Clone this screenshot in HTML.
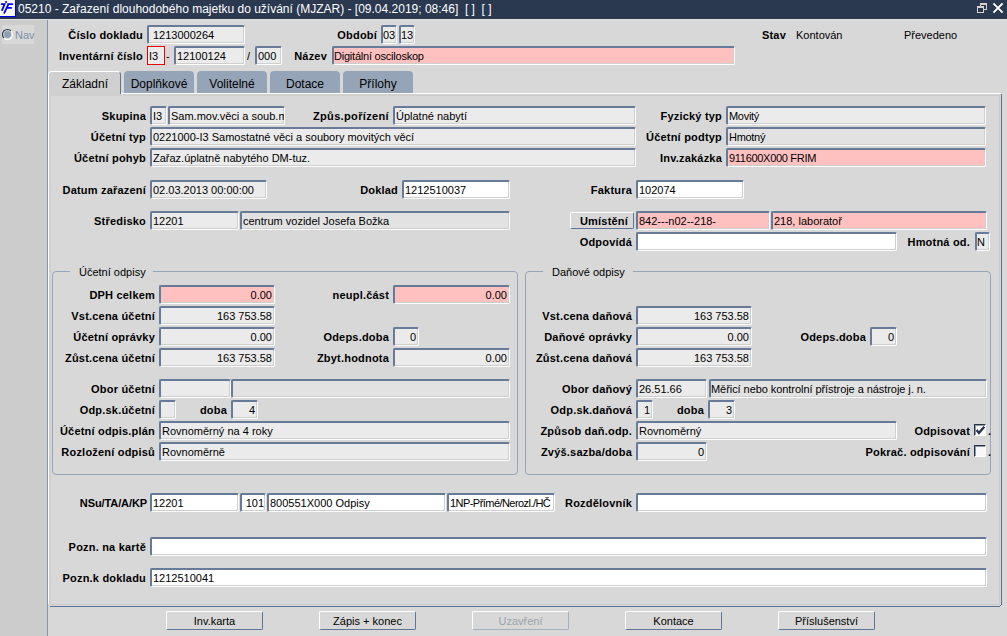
<!DOCTYPE html>
<html><head><meta charset="utf-8"><style>
html,body{margin:0;padding:0;}
body{width:1007px;height:636px;overflow:hidden;position:relative;background:#d8d8d8;font-family:"Liberation Sans",sans-serif;}
div{position:absolute;box-sizing:border-box;}
.tx{font-size:11px;line-height:13px;white-space:pre;color:#000;letter-spacing:0px;}
.lb{font-size:11px;line-height:13px;white-space:pre;color:#000;font-weight:bold;letter-spacing:0.2px;}
.r{text-align:right;}
.c{text-align:center;}
.in{overflow:hidden;border-top:2px solid #677b99;border-left:2px solid #677b99;border-right:1px solid #fff;border-bottom:1px solid #fff;border-radius:2px;box-shadow:inset -1px -1px 0 #cfcfcf;}
.btn{border:1px solid #fff;border-right-color:#5f7595;border-bottom-color:#5f7595;border-radius:2px;background:#d8d8d8;}
.tab{border-radius:4px 4px 0 0;background:#95a4b7;}
.tabt{font-size:12px;line-height:14px;white-space:pre;color:#000;}
.gb{border:1px solid #97a5b9;border-radius:4px;}
</style></head><body>

<div style="left:0;top:0;width:1007px;height:19px;background:#2a3850"></div>
<div style="left:0;top:19px;width:1007px;height:1px;background:#e4e1de"></div>
<div style="left:0;top:0;width:16px;height:17px;background:#f8f8f8;border-right:1px solid #0000ee;border-bottom:1px solid #0000ee"></div>
<svg style="position:absolute;left:0;top:0" width="16" height="16" viewBox="0 0 16 16"><g stroke="#0000f0" stroke-width="1.8" fill="none" stroke-linecap="round"><path d="M1.6 4.1H4.6L2.1 10.1"/><path d="M7.9 4.1H12.4M8.4 4.3L4.3 12.9M7 7.8H11.2"/></g><circle cx="6.1" cy="1.9" r="1.0" fill="#0000a0"/></svg>
<div style="left:18px;top:2px;font-size:12px;line-height:14px;color:#fff;white-space:pre">05210 - Zařazení dlouhodobého majetku do užívání (MJZAR) - [09.04.2019; 08:46]  [ ]  [ ]</div>
<svg style="position:absolute;left:970px;top:0px" width="37" height="18" viewBox="0 0 37 18" shape-rendering="crispEdges"><g fill="#d6d2cc"><rect x="10" y="3" width="7" height="2"/><rect x="16" y="5" width="1" height="5"/><rect x="14" y="9" width="3" height="1"/><rect x="10" y="5" width="1" height="1"/><rect x="7" y="6" width="7" height="2"/><rect x="7" y="8" width="1" height="5"/><rect x="13" y="8" width="1" height="5"/><rect x="7" y="12" width="7" height="1"/></g></svg>
<svg style="position:absolute;left:970px;top:0px" width="37" height="18" viewBox="0 0 37 18"><path d="M24.1 4.1L31.9 11.9M31.9 4.1L24.1 11.9" stroke="#fff" stroke-width="1.9" stroke-linecap="square"/></svg>
<div style="left:0;top:20px;width:47px;height:616px;background:#cccccc"></div>
<div style="left:47px;top:20px;width:1px;height:616px;background:#8494ab"></div>
<div style="left:2px;top:25px;width:32px;height:19px;background:#d8d8d8"></div>
<div style="left:2px;top:29px;width:11px;height:11px;border-radius:50%;border:1px solid #1e2a40;border-right-color:#fff;border-bottom-color:#fff"></div>
<div style="left:4px;top:31px;width:7px;height:7px;border-radius:50%;background:#8fa0b6"></div>
<div class="tx" style="left:15px;top:29px;color:#7d8ea6">Nav</div>
<div class="lb r" style="right:864px;top:29px">Číslo dokladu</div>
<div class="in" style="left:147px;top:25px;width:98px;height:19px;background:#ebebeb"><div class="tx" style="left:4px;top:2px">1213000264</div></div>
<div class="lb r" style="right:630px;top:29px">Období</div>
<div class="in" style="left:381px;top:25px;width:16px;height:19px;background:#ebebeb"><div class="tx" style="left:0px;top:2px">03</div></div>
<div class="in" style="left:399px;top:25px;width:16px;height:19px;background:#ebebeb"><div class="tx" style="left:0px;top:2px">13</div></div>
<div class="lb r" style="right:221px;top:29px">Stav</div>
<div class="tx" style="left:796px;top:29px">Kontován</div>
<div class="tx" style="left:904px;top:29px">Převedeno</div>
<div class="lb r" style="right:864px;top:50px">Inventární číslo</div>
<div style="left:147px;top:46px;width:18px;height:19px;border:1px solid #ee0000;background:#ebebeb"></div>
<div class="tx" style="left:149px;top:50px">I3</div>
<div class="tx" style="left:166px;top:50px">-</div>
<div class="in" style="left:174px;top:46px;width:71px;height:19px;background:#ebebeb"><div class="tx" style="left:1px;top:2px">12100124</div></div>
<div class="tx" style="left:247px;top:50px">/</div>
<div class="in" style="left:255px;top:46px;width:27px;height:19px;background:#ebebeb"><div class="tx" style="left:1px;top:2px">000</div></div>
<div class="lb r" style="right:680px;top:50px">Název</div>
<div class="in" style="left:332px;top:46px;width:403px;height:19px;background:#ffc0c0"><div class="tx" style="left:0px;top:2px;letter-spacing:-0.22px">Digitální osciloskop</div></div>
<div style="left:48px;top:71px;width:73px;height:25px;background:#d0d0d0;border-top:1px solid #fff;border-left:1px solid #fff;border-right:1px solid #5f7595;border-radius:4px 4px 0 0"></div>
<div class="tabt" style="left:62px;top:77px">Základní</div>
<div class="tab" style="left:124px;top:71px;width:70px;height:22px"></div>
<div class="tabt c" style="left:124px;width:70px;top:77px">Doplňkové</div>
<div class="tab" style="left:197px;top:71px;width:70px;height:22px"></div>
<div class="tabt c" style="left:197px;width:70px;top:77px">Volitelné</div>
<div class="tab" style="left:270px;top:71px;width:70px;height:22px"></div>
<div class="tabt c" style="left:270px;width:70px;top:77px">Dotace</div>
<div class="tab" style="left:343px;top:71px;width:70px;height:22px"></div>
<div class="tabt c" style="left:343px;width:70px;top:77px">Přílohy</div>
<div style="left:121px;top:93px;width:880px;height:1px;background:#fff"></div>
<div style="left:48px;top:96px;width:1px;height:508px;background:#fff"></div>
<div style="left:48px;top:93px;width:1px;height:3px;background:#fff"></div>
<div style="left:49px;top:94px;width:951px;height:2px;background:#cfcfcf"></div>
<div style="left:49px;top:94px;width:2px;height:511px;background:#d0d0d0"></div>
<div style="left:1001px;top:94px;width:1px;height:511px;background:#5a7293"></div>
<div style="left:1000px;top:605px;width:1px;height:1px;background:#5a7293"></div>
<div style="left:50px;top:606px;width:950px;height:1px;background:#5a7293"></div>
<div style="left:999px;top:95px;width:1px;height:510px;background:#cacaca"></div>
<div style="left:51px;top:604px;width:949px;height:1px;background:#cacaca"></div>
<div class="lb r" style="right:861px;top:110px">Skupina</div>
<div class="in" style="left:150px;top:106px;width:17px;height:19px;background:#ebebeb"><div class="tx" style="left:1px;top:2px">I3</div></div>
<div class="in" style="left:168px;top:106px;width:117px;height:19px;background:#ebebeb"><div class="tx" style="left:1px;top:2px">Sam.mov.věci a soub.m</div></div>
<div class="lb r" style="right:618px;top:110px;letter-spacing:0.35px">Způs.pořízení</div>
<div class="in" style="left:393px;top:106px;width:243px;height:19px;background:#ebebeb"><div class="tx" style="left:1px;top:2px">Úplatné nabytí</div></div>
<div class="lb r" style="right:285px;top:110px">Fyzický typ</div>
<div class="in" style="left:726px;top:106px;width:260px;height:19px;background:#ebebeb"><div class="tx" style="left:1px;top:2px;letter-spacing:-0.3px">Movitý</div></div>
<div class="lb r" style="right:861px;top:131px">Účetní typ</div>
<div class="in" style="left:150px;top:127px;width:486px;height:19px;background:#ebebeb"><div class="tx" style="left:1px;top:2px">0221000-I3 Samostatné věci a soubory movitých věcí</div></div>
<div class="lb r" style="right:285px;top:131px">Účetní podtyp</div>
<div class="in" style="left:726px;top:127px;width:260px;height:19px;background:#e2e2e2"><div class="tx" style="left:1px;top:2px;letter-spacing:-0.3px">Hmotný</div></div>
<div class="lb r" style="right:861px;top:152px">Účetní pohyb</div>
<div class="in" style="left:150px;top:148px;width:486px;height:19px;background:#ebebeb"><div class="tx" style="left:1px;top:2px">Zařaz.úplatně nabytého DM-tuz.</div></div>
<div class="lb r" style="right:285px;top:152px">Inv.zakázka</div>
<div class="in" style="left:726px;top:148px;width:260px;height:19px;background:#ffc0c0"><div class="tx" style="left:1px;top:2px;letter-spacing:-0.3px">911600X000 FRIM</div></div>
<div class="lb r" style="right:861px;top:184px">Datum zařazení</div>
<div class="in" style="left:150px;top:180px;width:117px;height:19px;background:#ebebeb"><div class="tx" style="left:1px;top:2px">02.03.2013 00:00:00</div></div>
<div class="lb r" style="right:609px;top:184px">Doklad</div>
<div class="in" style="left:402px;top:180px;width:108px;height:19px;background:#fff"><div class="tx" style="left:1px;top:2px">1212510037</div></div>
<div class="lb r" style="right:375px;top:184px">Faktura</div>
<div class="in" style="left:636px;top:180px;width:108px;height:19px;background:#fff"><div class="tx" style="left:1px;top:2px">102074</div></div>
<div class="lb r" style="right:861px;top:215px">Středisko</div>
<div class="in" style="left:150px;top:211px;width:89px;height:19px;background:#ebebeb"><div class="tx" style="left:1px;top:2px">12201</div></div>
<div class="in" style="left:240px;top:211px;width:270px;height:19px;background:#e2e2e2"><div class="tx" style="left:1px;top:2px">centrum vozidel Josefa Božka</div></div>
<div class="btn" style="left:570px;top:212px;width:64px;height:17px"></div>
<div class="lb c" style="left:572px;width:64px;top:215px">Umístění</div>
<div class="in" style="left:636px;top:211px;width:134px;height:19px;background:#ffc0c0"><div class="tx" style="left:1px;top:2px">842---n02--218-</div></div>
<div class="in" style="left:771px;top:211px;width:216px;height:19px;background:#ffc0c0"><div class="tx" style="left:1px;top:2px">218, laboratoř</div></div>
<div class="lb r" style="right:375px;top:236px">Odpovídá</div>
<div class="in" style="left:636px;top:232px;width:261px;height:19px;background:#fff"></div>
<div class="lb r" style="right:37px;top:236px">Hmotná od.</div>
<div class="in" style="left:975px;top:232px;width:15px;height:19px;background:#ebebeb"><div class="tx" style="left:0px;top:2px">N</div></div>
<div class="gb" style="left:52px;top:271px;width:466px;height:204px"></div>
<div style="left:70px;top:266px;width:83px;height:10px;background:#d8d8d8"></div>
<div class="tx" style="left:79px;top:266px">Účetní odpisy</div>
<div class="gb" style="left:525px;top:271px;width:466px;height:204px"></div>
<div style="left:543px;top:266px;width:90px;height:10px;background:#d8d8d8"></div>
<div class="tx" style="left:552px;top:266px">Daňové odpisy</div>
<div class="lb r" style="right:852px;top:289px">DPH celkem</div>
<div class="in" style="left:159px;top:285px;width:116px;height:19px;background:#ffc0c0"><div class="tx r" style="right:2px;top:2px">0.00</div></div>
<div class="lb r" style="right:618px;top:289px">neupl.část</div>
<div class="in" style="left:393px;top:285px;width:117px;height:19px;background:#ffc0c0"><div class="tx r" style="right:2px;top:2px">0.00</div></div>
<div class="lb r" style="right:852px;top:310px">Vst.cena účetní</div>
<div class="in" style="left:159px;top:306px;width:116px;height:19px;background:#ebebeb"><div class="tx r" style="right:2px;top:2px">163 753.58</div></div>
<div class="lb r" style="right:375px;top:310px">Vst.cena daňová</div>
<div class="in" style="left:636px;top:306px;width:116px;height:19px;background:#ebebeb"><div class="tx r" style="right:2px;top:2px">163 753.58</div></div>
<div class="lb r" style="right:852px;top:331px">Účetní oprávky</div>
<div class="in" style="left:159px;top:327px;width:116px;height:19px;background:#ebebeb"><div class="tx r" style="right:2px;top:2px">0.00</div></div>
<div class="lb r" style="right:618px;top:331px">Odeps.doba</div>
<div class="in" style="left:393px;top:327px;width:26px;height:19px;background:#ebebeb"><div class="tx r" style="right:2px;top:2px">0</div></div>
<div class="lb r" style="right:375px;top:331px">Daňové oprávky</div>
<div class="in" style="left:636px;top:327px;width:116px;height:19px;background:#ebebeb"><div class="tx r" style="right:2px;top:2px">0.00</div></div>
<div class="lb r" style="right:141px;top:331px">Odeps.doba</div>
<div class="in" style="left:870px;top:327px;width:27px;height:19px;background:#ebebeb"><div class="tx r" style="right:2px;top:2px">0</div></div>
<div class="lb r" style="right:852px;top:352px">Zůst.cena účetní</div>
<div class="in" style="left:159px;top:348px;width:116px;height:19px;background:#ebebeb"><div class="tx r" style="right:2px;top:2px">163 753.58</div></div>
<div class="lb r" style="right:618px;top:352px">Zbyt.hodnota</div>
<div class="in" style="left:393px;top:348px;width:117px;height:19px;background:#ebebeb"><div class="tx r" style="right:2px;top:2px">0.00</div></div>
<div class="lb r" style="right:375px;top:352px">Zůst.cena daňová</div>
<div class="in" style="left:636px;top:348px;width:116px;height:19px;background:#ebebeb"><div class="tx r" style="right:2px;top:2px">163 753.58</div></div>
<div class="lb r" style="right:852px;top:383px">Obor účetní</div>
<div class="in" style="left:159px;top:379px;width:72px;height:19px;background:#ebebeb"></div>
<div class="in" style="left:231px;top:379px;width:279px;height:19px;background:#e2e2e2"></div>
<div class="lb r" style="right:375px;top:383px">Obor daňový</div>
<div class="in" style="left:636px;top:379px;width:71px;height:19px;background:#ebebeb"><div class="tx" style="left:1px;top:2px">26.51.66</div></div>
<div class="in" style="left:709px;top:379px;width:278px;height:19px;background:#e2e2e2"><div class="tx" style="left:0px;top:2px;letter-spacing:-0.06px">Měřicí nebo kontrolní přístroje a nástroje j. n.</div></div>
<div class="lb r" style="right:852px;top:404px">Odp.sk.účetní</div>
<div class="in" style="left:159px;top:400px;width:17px;height:19px;background:#ebebeb"></div>
<div class="lb r" style="right:780px;top:404px">doba</div>
<div class="in" style="left:231px;top:400px;width:27px;height:19px;background:#ebebeb"><div class="tx r" style="right:2px;top:2px">4</div></div>
<div class="lb r" style="right:375px;top:404px">Odp.sk.daňová</div>
<div class="in" style="left:636px;top:400px;width:17px;height:19px;background:#ebebeb"><div class="tx r" style="right:2px;top:2px">1</div></div>
<div class="lb r" style="right:303px;top:404px">doba</div>
<div class="in" style="left:708px;top:400px;width:27px;height:19px;background:#ebebeb"><div class="tx r" style="right:2px;top:2px">3</div></div>
<div class="lb r" style="right:852px;top:425px">Účetní odpis.plán</div>
<div class="in" style="left:159px;top:421px;width:351px;height:19px;background:#ebebeb"><div class="tx" style="left:1px;top:2px">Rovnoměrný na 4 roky</div></div>
<div class="lb r" style="right:375px;top:425px">Způsob daň.odp.</div>
<div class="in" style="left:636px;top:421px;width:261px;height:19px;background:#ebebeb"><div class="tx" style="left:1px;top:2px">Rovnoměrný</div></div>
<div class="lb r" style="right:37px;top:425px">Odpisovat</div>
<div style="left:974px;top:424px;width:12px;height:12px;background:#f8f8f8;border-top:1px solid #283448;border-left:1px solid #283448;border-right:1px solid #fff;border-bottom:1px solid #fff;box-shadow:inset 1px 1px 0 #9098a4"></div>
<svg style="position:absolute;left:974px;top:424px" width="12" height="12" viewBox="0 0 12 12"><path d="M2.6 6.1L4.9 8.9L10.3 2.8" fill="none" stroke="#25324a" stroke-width="2.3"/></svg>
<div class="lb" style="left:988px;top:425px">.</div>
<div class="lb r" style="right:852px;top:446px">Rozložení odpisů</div>
<div class="in" style="left:159px;top:442px;width:351px;height:19px;background:#ebebeb"><div class="tx" style="left:1px;top:2px">Rovnoměrně</div></div>
<div class="lb r" style="right:375px;top:446px">Zvýš.sazba/doba</div>
<div class="in" style="left:636px;top:442px;width:71px;height:19px;background:#ebebeb"><div class="tx r" style="right:2px;top:2px">0</div></div>
<div class="lb r" style="right:37px;top:446px">Pokrač. odpisování</div>
<div style="left:974px;top:445px;width:12px;height:12px;background:#f8f8f8;border-top:1px solid #283448;border-left:1px solid #283448;border-right:1px solid #fff;border-bottom:1px solid #fff;box-shadow:inset 1px 1px 0 #9098a4"></div>
<div class="lb" style="left:988px;top:446px">.</div>
<div class="lb r" style="right:860px;top:497px;letter-spacing:-0.1px">NSu/TA/A/KP</div>
<div class="in" style="left:150px;top:493px;width:89px;height:19px;background:#fff"><div class="tx" style="left:1px;top:2px">12201</div></div>
<div class="in" style="left:240px;top:493px;width:26px;height:19px;background:#fff"><div class="tx r" style="right:1px;top:2px">101</div></div>
<div class="in" style="left:267px;top:493px;width:179px;height:19px;background:#fff"><div class="tx" style="left:1px;top:2px">800551X000 Odpisy</div></div>
<div class="in" style="left:447px;top:493px;width:108px;height:19px;background:#fff"><div class="tx" style="left:1px;top:2px;letter-spacing:-0.55px">1NP-Přímé/Nerozl./HČ</div></div>
<div class="lb r" style="right:375px;top:497px">Rozdělovník</div>
<div class="in" style="left:636px;top:493px;width:351px;height:19px;background:#fff"></div>
<div class="lb r" style="right:861px;top:541px">Pozn. na kartě</div>
<div class="in" style="left:150px;top:537px;width:837px;height:19px;background:#fff"></div>
<div class="lb r" style="right:861px;top:572px">Pozn.k dokladu</div>
<div class="in" style="left:150px;top:568px;width:837px;height:19px;background:#fff"><div class="tx" style="left:1px;top:2px">1212510041</div></div>
<div class="btn" style="left:166px;top:611px;width:97px;height:19px"></div>
<div class="tx c" style="left:166px;width:97px;top:615px;color:#000">Inv.karta</div>
<div class="btn" style="left:319px;top:611px;width:97px;height:19px"></div>
<div class="tx c" style="left:319px;width:97px;top:615px;color:#000">Zápis + konec</div>
<div class="btn" style="left:472px;top:611px;width:97px;height:19px;border-right-color:#a3b0c0;border-bottom-color:#a3b0c0"></div>
<div class="tx c" style="left:472px;width:97px;top:615px;color:#9aa3ad">Uzavření</div>
<div class="btn" style="left:625px;top:611px;width:97px;height:19px"></div>
<div class="tx c" style="left:625px;width:97px;top:615px;color:#000">Kontace</div>
<div class="btn" style="left:778px;top:611px;width:97px;height:19px"></div>
<div class="tx c" style="left:778px;width:97px;top:615px;color:#000">Příslušenství</div>
</body></html>
